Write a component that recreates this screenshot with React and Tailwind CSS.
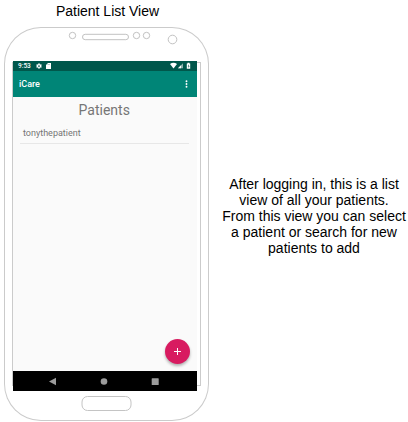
function Sensors() {
  return (
    <svg className="block h-[34px] w-full" viewBox="4 27 205 34" fill="white" stroke="#c2c2c2" strokeWidth="1">
      <circle cx="72.5" cy="35.5" r="3.2" />
      <rect x="82.5" y="34.3" width="46" height="5.4" rx="2.7" />
      <circle cx="136.5" cy="35.5" r="3.2" />
      <circle cx="146.5" cy="35.5" r="3.2" />
      <circle cx="172.5" cy="39.5" r="4.3" />
    </svg>
  );
}

function StatusBar() {
  return (
    <div className="flex h-[10px] items-center justify-between bg-[#00574b] pr-[5px] pl-[5px]">
      <div className="flex items-center">
        <span className="w-[18px] font-[Roboto,sans-serif] text-[6.5px] leading-[10px] font-medium text-white">9:53</span>
        <svg className="h-[6px] w-[6px]" viewBox="0 0 24 24" fill="white">
          <path fillRule="evenodd" d="M10 1h4l1 4 2 1 4-1 2 4-3 3 3 3-2 4-4-1-2 1-1 4h-4l-1-4-2-1-4 1-2-4 3-3-3-3 2-4 4 1 2-1zM12 8.500a3.500 3.500 0 100 7 3.500 3.500 0 000-7z" />
        </svg>
        <svg className="ml-[4px] h-[6px] w-[5px]" viewBox="0 0 5 6" fill="white">
          <path d="M2 0h3v6H0V2z" />
          <path d="M2 1v1M3.200 1v1" stroke="#00574b" strokeWidth=".4" />
        </svg>
      </div>
      <svg className="h-[8px] w-[22px]" viewBox="170 62 22 8" fill="white">
        <path d="M170 64q3.500-2.400 7 0l-3.500 4.400z" />
        <path d="M178 68.300l5-5v5z" opacity=".55" />
        <path d="M178 68.300l3-3v3z" />
        <path d="M186.800 63.500h.8v-.8h1.800v.8h.8v5.300h-3.400z" />
        <path d="M188.700 64.300l-1 2h.8v1.600l1-2h-.8z" fill="#00574b" />
      </svg>
    </div>
  );
}

function Screen() {
  return (
    <div className="absolute top-0 left-[9px] flex h-[330px] w-[183.500px] flex-col bg-[#fafafa] font-[Roboto,sans-serif]">
      <StatusBar />
      <div className="flex h-[25.500px] items-center justify-between bg-[#008577] pr-[8.500px] pl-[6px]">
        <span className="text-[9px] leading-[10px] font-medium text-white">iCare</span>
        <svg className="h-[8px] w-[3px]" viewBox="0 0 3 8" fill="white">
          <circle cx="1.500" cy="1.200" r=".95" />
          <circle cx="1.500" cy="4" r=".95" />
          <circle cx="1.500" cy="6.800" r=".95" />
        </svg>
      </div>
      <h1 className="mt-[4.500px] pr-[1px] text-center text-[14px] leading-[18px] text-[#767676]">Patients</h1>
      <div className="mr-[7.500px] ml-[7px] h-[25px] border-b border-[#e7e7e7] pt-[7.500px] pl-[3px] text-[9px] leading-[12px] text-[#757575]">
        tonythepatient
      </div>
      <div className="flex flex-1 items-end justify-end pr-[6.500px] pb-[7px]">
        <div className="flex h-[25px] w-[25px] items-center justify-center rounded-full bg-[#d81b60] shadow-[0_2px_3px_rgba(0,0,0,0.3)]">
          <svg className="h-[7px] w-[7px]" viewBox="0 0 7 7" stroke="white" strokeWidth="1">
            <path d="M3.500 0v7M0 3.500h7" />
          </svg>
        </div>
      </div>
      <svg className="block h-[20.500px] w-full bg-black" viewBox="13 370.500 183.500 20.500" fill="#9c9c9c">
        <path d="M49 381l7-3.800v7.600z" />
        <circle cx="104" cy="381" r="3.300" />
        <rect x="151.700" y="377.700" width="7" height="6.800" rx=".6" />
      </svg>
    </div>
  );
}

export default function App() {
  return (
    <main className="flex h-[422px] w-[408px] overflow-hidden bg-white font-['Liberation_Sans',Arial,sans-serif] text-black">
      <section className="ml-[4px] w-[205px] shrink-0">
        <h2 className="h-[27px] pt-[3px] pl-[2px] text-center text-[14px] leading-[16px]">Patient List View</h2>
        <div className="h-[394px] w-[205px] rounded-[37px] shadow-[inset_0_0_0_1px_#cbcbcb]">
          <Sensors />
          <div className="relative h-[335px] pt-[1px] pl-[8px]">
            <div className="h-[324px] w-[189px] border border-[#cbcbcb]" />
            <Screen />
          </div>
          <div className="mx-auto h-[15px] w-[50px] translate-x-[-0.500px] rounded-[6px] border border-[#c4c4c4]" />
        </div>
      </section>
      <p className="mt-[176px] ml-[10px] w-[190px] shrink-0 text-center text-[14px] leading-[16px] whitespace-nowrap">
        After logging in, this is a list
        <br />
        view of all your patients.
        <br />
        From this view you can select
        <br />
        a patient or search for new
        <br />
        patients to add
      </p>
    </main>
  );
}
